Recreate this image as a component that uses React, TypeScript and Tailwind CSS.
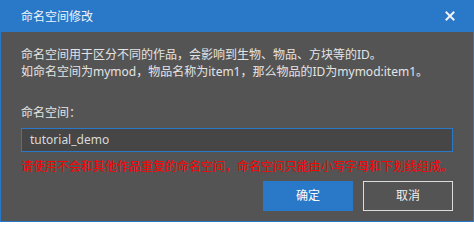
const FONT = "font-['Noto_Sans','Noto_Sans_CJK_SC',sans-serif]";

function CloseIcon() {
  return (
    <svg width="10" height="10" viewBox="0 0 10 10" className="text-[#eef3fa]">
      <path d="M1.5 1.5 L8.5 8.5 M8.5 1.5 L1.5 8.5" stroke="currentColor" strokeWidth="2" strokeLinecap="square" />
    </svg>
  );
}

export default function App() {
  return (
    <div className={`flex h-[222px] w-[474px] flex-col text-[12px] ${FONT}`}>
      {/* Title bar */}
      <div className="flex h-[32px] items-center justify-between bg-[#2a78c8] pl-[21px] pr-[19px]">
        <span className="leading-[17px] text-[#f0f4fa]">命名空间修改</span>
        <CloseIcon />
      </div>

      {/* Body */}
      <div className="flex flex-1 flex-col border-x border-b border-[#2a78c8] bg-[#545454] px-[20px] text-[#e4e4e4]">
        <div className="mt-[14px] leading-[17px]">
          <p>命名空间用于区分不同的作品，会影响到生物、物品、方块等的ID。</p>
          <p>如命名空间为mymod，物品名称为item1，那么物品的ID为mymod:item1。</p>
        </div>

        <div className="mt-[24px] leading-[17px]">命名空间：</div>

        <div className="mt-[7px] flex h-[24px] items-center border border-[#2a78c8] bg-[#464646] px-[8px] text-[#dadada]">
          tutorial_demo
        </div>

        <div className="mt-[6px] whitespace-nowrap leading-[17px] text-[#ff0000]">
          请使用不会和其他作品重复的命名空间，命名空间只能由小写字母和下划线组成。
        </div>

        <div className="mt-[6px] flex justify-end gap-[10px]">
          <button
            type="button"
            className="flex h-[30px] w-[90px] items-center justify-center bg-[#2a78c8] text-[12px] text-white"
          >
            确定
          </button>
          <button
            type="button"
            className="flex h-[30px] w-[90px] items-center justify-center border border-[#dcdcdc] text-[12px] text-[#f0f0f0]"
          >
            取消
          </button>
        </div>
      </div>
    </div>
  );
}
